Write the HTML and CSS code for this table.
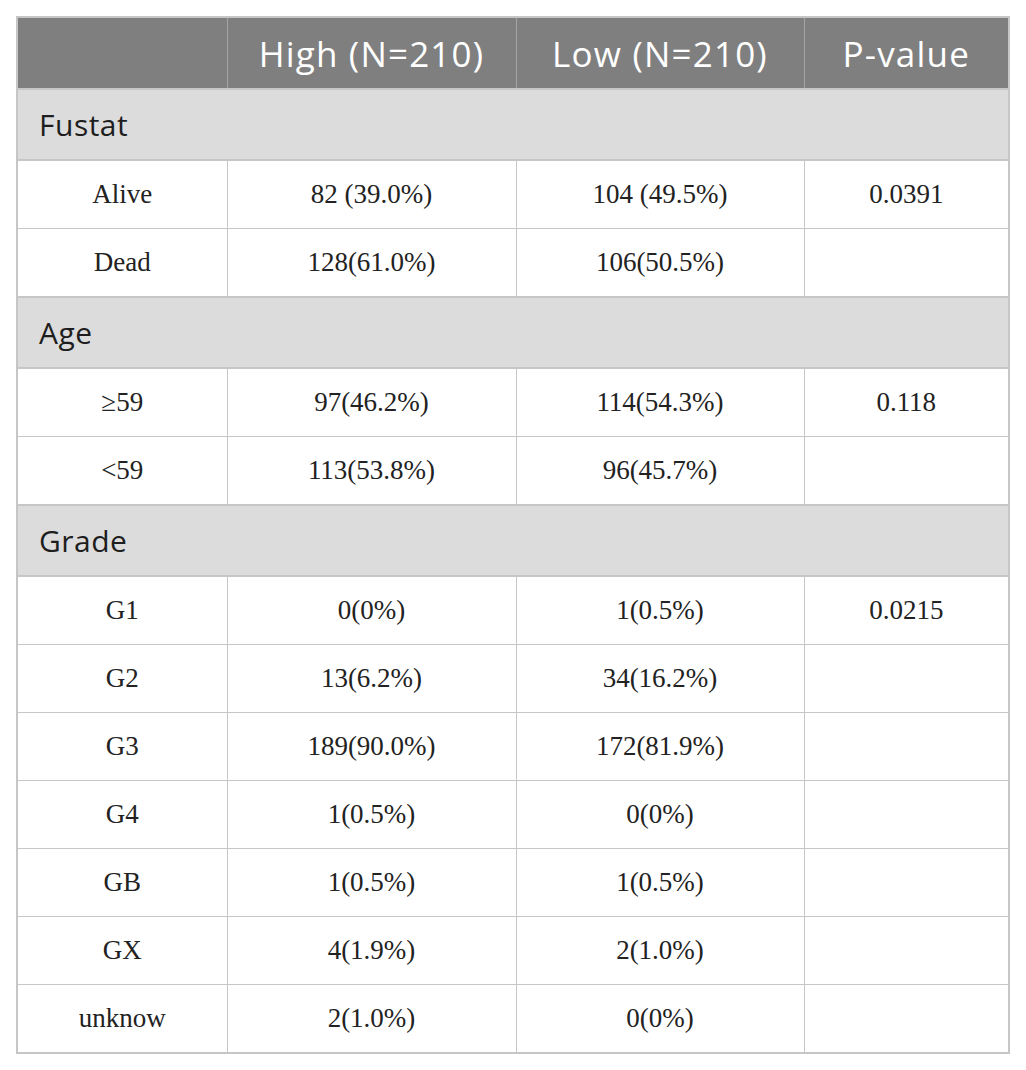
FILE: index.html
```html
<!DOCTYPE html>
<html lang="en">
<head>
    <meta charset="UTF-8">
    <title>Risk groups table</title>
    <link rel="stylesheet" href="styles.css">
</head>
<body>
    <table class="stats">
        <colgroup>
            <col class="c-label">
            <col class="c-high">
            <col class="c-low">
            <col class="c-p">
        </colgroup>
        <thead>
            <tr>
                <th></th>
                <th>High (N=210)</th>
                <th>Low (N=210)</th>
                <th>P-value</th>
            </tr>
        </thead>
        <tbody>
            <tr class="section"><td colspan="4">Fustat</td></tr>
            <tr><td>Alive</td><td>82 (39.0%)</td><td>104 (49.5%)</td><td>0.0391</td></tr>
            <tr><td>Dead</td><td>128(61.0%)</td><td>106(50.5%)</td><td></td></tr>

            <tr class="section"><td colspan="4">Age</td></tr>
            <tr><td>≥59</td><td>97(46.2%)</td><td>114(54.3%)</td><td>0.118</td></tr>
            <tr><td>&lt;59</td><td>113(53.8%)</td><td>96(45.7%)</td><td></td></tr>

            <tr class="section"><td colspan="4">Grade</td></tr>
            <tr><td>G1</td><td>0(0%)</td><td>1(0.5%)</td><td>0.0215</td></tr>
            <tr><td>G2</td><td>13(6.2%)</td><td>34(16.2%)</td><td></td></tr>
            <tr><td>G3</td><td>189(90.0%)</td><td>172(81.9%)</td><td></td></tr>
            <tr><td>G4</td><td>1(0.5%)</td><td>0(0%)</td><td></td></tr>
            <tr><td>GB</td><td>1(0.5%)</td><td>1(0.5%)</td><td></td></tr>
            <tr><td>GX</td><td>4(1.9%)</td><td>2(1.0%)</td><td></td></tr>
            <tr><td>unknow</td><td>2(1.0%)</td><td>0(0%)</td><td></td></tr>
        </tbody>
    </table>
</body>
</html>
```

FILE: styles.css
```css
body {
    margin: 0;
    padding: 16px 0 0 16px;
    background-color: #ffffff;
}
.stats {
    border-collapse: collapse;
    table-layout: fixed;
    width: 992px;
    border: 2px solid #c6c6c6;
}
.c-label { width: 210px; }
.c-high { width: 289px; }
.c-low { width: 288px; }
.c-p { width: 205px; }

.stats th {
    height: 70px;
    padding: 0;
    background-color: #7f7f7f;
    color: #ffffff;
    font-family: 'Open Sans', sans-serif;
    font-weight: normal;
    font-size: 35px;
    letter-spacing: 1.2px;
    text-align: center;
    vertical-align: middle;
    border-left: 1px solid #a3a3a3;
    border-bottom: 2px solid #c6c6c6;
}
.stats th:first-child {
    border-left: none;
}
.stats td {
    height: 67px;
    padding: 0;
    font-family: 'Liberation Serif', serif;
    font-size: 27px;
    color: #222222;
    text-align: center;
    vertical-align: middle;
    border: 1px solid #c6c6c6;
}
.stats .section td {
    height: 69px;
    padding: 0 0 0 21px;
    background-color: #dcdcdc;
    font-family: 'Open Sans', sans-serif;
    font-size: 30px;
    letter-spacing: 0.5px;
    color: #1e1e1e;
    text-align: left;
    border-top: 2px solid #c6c6c6;
    border-bottom: 2px solid #c6c6c6;
}
```
